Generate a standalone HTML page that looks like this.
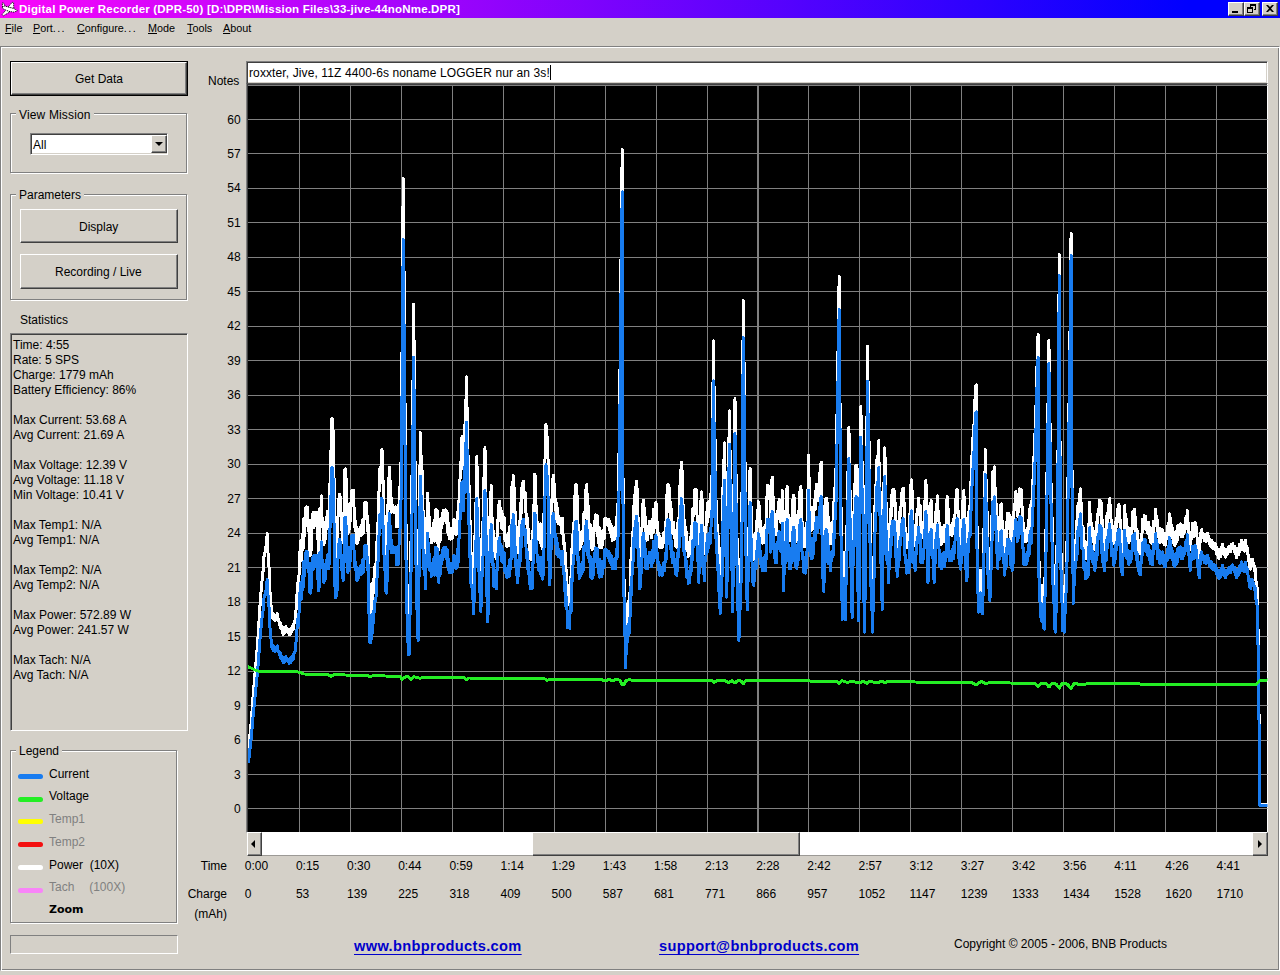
<!DOCTYPE html>
<html><head><meta charset="utf-8"><title>Digital Power Recorder (DPR-50)</title>
<style>
html,body{margin:0;padding:0;}
body{width:1280px;height:975px;overflow:hidden;background:#d4d0c8;position:relative;
 font-family:"Liberation Sans",Arial,sans-serif;font-size:12px;color:#000;}
div{box-sizing:border-box;}
.t{position:absolute;white-space:nowrap;}
.gray{color:#808080;}
.titlebar{position:absolute;left:0;top:0;width:1280px;height:18px;
 background:linear-gradient(to right,#fa06fa 0%,#0000ff 93%,#0000ff 100%);}
.ticon{position:absolute;left:0;top:0;}
.ttext{position:absolute;left:19px;top:1px;line-height:17px;color:#fff;font-weight:bold;font-size:11.5px;white-space:nowrap;letter-spacing:0.2px;}
.cap{position:absolute;top:2px;width:16px;height:14px;background:#d4d0c8;border:1px solid;border-color:#fff #404040 #404040 #fff;
 box-shadow:inset -1px -1px 0 #808080;}
.cap svg{position:absolute;left:0;top:0;}
.menu{font-size:10.8px;}
.frame{position:absolute;left:0;top:46px;width:1280px;height:925px;border:1px solid #808080;border-bottom-color:#fff;border-right-color:#fff;
 box-shadow:inset 1px 1px 0 #fff, inset -1px -1px 0 #808080;}
.btn{position:absolute;background:#d4d0c8;border:1px solid;border-color:#fff #404040 #404040 #fff;box-shadow:inset -1px -1px 0 #808080;}
.defbtn{position:absolute;border:1px solid #000;}
.sbtn{position:absolute;background:#d4d0c8;border:1px solid;border-color:#fff #404040 #404040 #fff;box-shadow:inset -1px -1px 0 #808080;}
.group{position:absolute;border:1px solid #808080;box-shadow:1px 1px 0 #fff, inset 1px 1px 0 #fff;}
.sunk{position:absolute;border:1px solid;border-color:#808080 #fff #fff #808080;box-shadow:inset 1px 1px 0 #404040, inset -1px -1px 0 #d4d0c8;}
.sunk1{position:absolute;border:1px solid;border-color:#808080 #fff #fff #808080;}
.sunkc{position:absolute;border:1px solid;border-color:#585858 #fff #fff #808080;box-shadow:inset 1px 1px 0 #404040;}
.track{position:absolute;background:#fff;border-bottom:1px solid #9c9a96;}
.lbar{position:absolute;left:18px;width:25px;height:5px;border-radius:2.5px;}
.zoom{font-family:'DejaVu Sans',sans-serif;font-weight:bold;font-size:11px;}
.link{color:#0000cc;font-weight:bold;font-size:14.6px;letter-spacing:0.36px;text-decoration:underline;text-underline-offset:2.5px;text-decoration-thickness:1px;}
.caret{position:absolute;left:550px;top:65px;width:1px;height:15px;background:#000;}
.arrd{position:absolute;left:3px;top:6px;width:0;height:0;border-left:4px solid transparent;border-right:4px solid transparent;border-top:4px solid #000;}
.arrl{position:absolute;left:3px;top:7px;width:0;height:0;border-top:4px solid transparent;border-bottom:4px solid transparent;border-right:4px solid #000;}
.arrr{position:absolute;left:5px;top:7px;width:0;height:0;border-top:4px solid transparent;border-bottom:4px solid transparent;border-left:4px solid #000;}
.chart{position:absolute;left:0;top:0;pointer-events:none;}
</style></head>
<body>
<div class="titlebar"><svg class="ticon" width="20" height="18" viewBox="0 0 20 18"><g fill="#fff" stroke="#000" stroke-width="0.9" stroke-dasharray="1.2 0.8" stroke-linejoin="round"><path d="M2.2 3 L3.6 3 L5.2 6.3 L2.6 7.2 Z"/><path d="M8 7.2 L12.2 2.3 L13.6 2.6 L13.8 8.8 Z"/><path d="M6.5 9.3 L2 14.6 L3.4 15.8 L10.5 11.6 Z"/><path d="M2.2 7.2 L4.5 6 L14 8.6 L17.3 10.6 L14.2 12.2 L9 11.4 L3 8.8 Z"/></g></svg><span class="ttext">Digital Power Recorder (DPR-50) [D:\DPR\Mission Files\33-jive-44noNme.DPR]</span><div class="cap" style="left:1228px"><svg width="14" height="12" viewBox="0 0 14 12"><rect x="3" y="8" width="6" height="2" fill="#000"/></svg></div><div class="cap" style="left:1244px"><svg width="14" height="12" viewBox="0 0 14 12"><path d="M5 1h6v2h-6zM5 3h1v2h-1zM10 3h1v4h-1zM9 6h1v1h-1z M2 4h6v2h-6zM2 6h1v4h-1zM7 6h1v4h-1zM3 9h4v1h-4z" fill="#000"/></svg></div><div class="cap" style="left:1262px"><svg width="14" height="12" viewBox="0 0 14 12"><path d="M3 2h2l2 2l2-2h2l-3 3.5l3 3.5h-2l-2-2l-2 2h-2l3-3.5z" fill="#000"/></svg></div></div>
<div class="t menu" style="left:5.0px;top:19.5px;line-height:16px;"><u>F</u>ile</div>
<div class="t menu" style="left:33.0px;top:19.5px;line-height:16px;"><u>P</u>ort<span style="letter-spacing:1.4px">...</span></div>
<div class="t menu" style="left:77.0px;top:19.5px;line-height:16px;"><u>C</u>onfigure<span style="letter-spacing:1.4px">...</span></div>
<div class="t menu" style="left:148.0px;top:19.5px;line-height:16px;"><u>M</u>ode</div>
<div class="t menu" style="left:187.0px;top:19.5px;line-height:16px;"><u>T</u>ools</div>
<div class="t menu" style="left:223.0px;top:19.5px;line-height:16px;"><u>A</u>bout</div>
<div class="frame"></div>
<div class="defbtn" style="left:10px;top:61px;width:178px;height:35px;"><div class="btn" style="left:0;top:0;right:0;bottom:0;position:absolute"></div></div>
<div class="t " style="left:75.0px;top:70.5px;line-height:16px;">Get Data</div>
<div class="group" style="left:10px;top:113px;width:177px;height:60px;"></div>
<div class="t " style="left:16.0px;top:106.5px;line-height:16px;background:#d4d0c8;padding:0 3px;letter-spacing:0.15px;">View Mission</div>
<div class="sunk" style="left:30px;top:133px;width:138px;height:22px;background:#fff;"></div>
<div class="t " style="left:33.0px;top:136.5px;line-height:16px;">All</div>
<div class="btn" style="left:151px;top:135px;width:16px;height:18px;"><div class="arrd"></div></div>
<div class="group" style="left:10px;top:194px;width:177px;height:106px;"></div>
<div class="t " style="left:16.0px;top:186.5px;line-height:16px;background:#d4d0c8;padding:0 3px;">Parameters</div>
<div class="btn" style="left:20px;top:209px;width:158px;height:34px;"></div>
<div class="t " style="left:79.0px;top:218.5px;line-height:16px;">Display</div>
<div class="btn" style="left:20px;top:254px;width:158px;height:35px;"></div>
<div class="t " style="left:55.0px;top:263.5px;line-height:16px;">Recording / Live</div>
<div class="t " style="left:20.0px;top:312.0px;line-height:16px;">Statistics</div>
<div class="sunk" style="left:10px;top:333px;width:178px;height:398px;"></div>
<div class="t " style="left:13.0px;top:336.5px;line-height:16px;">Time: 4:55</div>
<div class="t " style="left:13.0px;top:351.5px;line-height:16px;">Rate: 5 SPS</div>
<div class="t " style="left:13.0px;top:366.5px;line-height:16px;">Charge: 1779 mAh</div>
<div class="t " style="left:13.0px;top:381.5px;line-height:16px;">Battery Efficiency: 86%</div>
<div class="t " style="left:13.0px;top:411.5px;line-height:16px;">Max Current: 53.68 A</div>
<div class="t " style="left:13.0px;top:426.5px;line-height:16px;">Avg Current: 21.69 A</div>
<div class="t " style="left:13.0px;top:456.5px;line-height:16px;">Max Voltage: 12.39 V</div>
<div class="t " style="left:13.0px;top:471.5px;line-height:16px;">Avg Voltage: 11.18 V</div>
<div class="t " style="left:13.0px;top:486.5px;line-height:16px;">Min Voltage: 10.41 V</div>
<div class="t " style="left:13.0px;top:516.5px;line-height:16px;">Max Temp1: N/A</div>
<div class="t " style="left:13.0px;top:531.5px;line-height:16px;">Avg Temp1: N/A</div>
<div class="t " style="left:13.0px;top:561.5px;line-height:16px;">Max Temp2: N/A</div>
<div class="t " style="left:13.0px;top:576.5px;line-height:16px;">Avg Temp2: N/A</div>
<div class="t " style="left:13.0px;top:606.5px;line-height:16px;">Max Power: 572.89 W</div>
<div class="t " style="left:13.0px;top:621.5px;line-height:16px;">Avg Power: 241.57 W</div>
<div class="t " style="left:13.0px;top:651.5px;line-height:16px;">Max Tach: N/A</div>
<div class="t " style="left:13.0px;top:666.5px;line-height:16px;">Avg Tach: N/A</div>
<div class="group" style="left:10px;top:750px;width:167px;height:173px;"></div>
<div class="t " style="left:16.0px;top:742.5px;line-height:16px;background:#d4d0c8;padding:0 3px;">Legend</div>
<div class="lbar" style="top:773.5px;background:#187cf0"></div>
<div class="t " style="left:49.0px;top:765.7px;line-height:16px;">Current</div>
<div class="lbar" style="top:796.5px;background:#24ee24"></div>
<div class="t " style="left:49.0px;top:788.2px;line-height:16px;">Voltage</div>
<div class="lbar" style="top:819.0px;background:#ffff00"></div>
<div class="t gray" style="left:49.0px;top:810.7px;line-height:16px;">Temp1</div>
<div class="lbar" style="top:841.5px;background:#f41010"></div>
<div class="t gray" style="left:49.0px;top:833.7px;line-height:16px;">Temp2</div>
<div class="lbar" style="top:864.5px;background:#ffffff"></div>
<div class="t " style="left:49.0px;top:856.7px;line-height:16px;">Power&nbsp;&nbsp;(10X)</div>
<div class="lbar" style="top:888.0px;background:#f884f8"></div>
<div class="t gray" style="left:49.0px;top:879.2px;line-height:16px;">Tach&nbsp;&nbsp;&nbsp;&nbsp;<span style="margin-left:1.5px">(100X)</span></div>
<div class="t zoom" style="left:49.0px;top:901.5px;line-height:16px;">Zoom</div>
<div class="sunk1" style="left:10px;top:935px;width:168px;height:19px;"></div>
<div class="t " style="left:208.0px;top:72.5px;line-height:16px;">Notes</div>
<div class="sunk" style="left:246px;top:61px;width:1022px;height:23px;background:#fff;"></div>
<div class="t " style="left:249.0px;top:65.0px;line-height:16px;letter-spacing:0.11px;">roxxter, Jive, 11Z 4400-6s noname LOGGER nur an 3s!</div>
<div class="caret"></div>
<div class="sunkc" style="left:246px;top:83px;width:1022px;height:750px;background:#000;"></div>
<div class="t " style="right:1039.3px;top:801.0px;line-height:16px;">0</div>
<div class="t " style="right:1039.3px;top:766.5px;line-height:16px;">3</div>
<div class="t " style="right:1039.3px;top:732.0px;line-height:16px;">6</div>
<div class="t " style="right:1039.3px;top:697.6px;line-height:16px;">9</div>
<div class="t " style="right:1039.3px;top:663.1px;line-height:16px;">12</div>
<div class="t " style="right:1039.3px;top:628.6px;line-height:16px;">15</div>
<div class="t " style="right:1039.3px;top:594.1px;line-height:16px;">18</div>
<div class="t " style="right:1039.3px;top:559.7px;line-height:16px;">21</div>
<div class="t " style="right:1039.3px;top:525.2px;line-height:16px;">24</div>
<div class="t " style="right:1039.3px;top:490.7px;line-height:16px;">27</div>
<div class="t " style="right:1039.3px;top:456.2px;line-height:16px;">30</div>
<div class="t " style="right:1039.3px;top:421.8px;line-height:16px;">33</div>
<div class="t " style="right:1039.3px;top:387.3px;line-height:16px;">36</div>
<div class="t " style="right:1039.3px;top:352.8px;line-height:16px;">39</div>
<div class="t " style="right:1039.3px;top:318.3px;line-height:16px;">42</div>
<div class="t " style="right:1039.3px;top:283.9px;line-height:16px;">45</div>
<div class="t " style="right:1039.3px;top:249.4px;line-height:16px;">48</div>
<div class="t " style="right:1039.3px;top:214.9px;line-height:16px;">51</div>
<div class="t " style="right:1039.3px;top:180.4px;line-height:16px;">54</div>
<div class="t " style="right:1039.3px;top:146.0px;line-height:16px;">57</div>
<div class="t " style="right:1039.3px;top:111.5px;line-height:16px;">60</div>
<div class="track" style="left:247px;top:832px;width:1021px;height:24px;"></div>
<div class="sbtn" style="left:247px;top:832px;width:15px;height:24px;"><div class="arrl"></div></div>
<div class="sbtn" style="left:1252px;top:832px;width:16px;height:24px;"><div class="arrr"></div></div>
<div class="sbtn" style="left:532px;top:832px;width:268px;height:24px;"></div>
<div class="t " style="left:244.8px;top:858.0px;line-height:16px;">0:00</div>
<div class="t " style="left:244.8px;top:885.5px;line-height:16px;">0</div>
<div class="t " style="left:295.9px;top:858.0px;line-height:16px;">0:15</div>
<div class="t " style="left:295.9px;top:885.5px;line-height:16px;">53</div>
<div class="t " style="left:347.1px;top:858.0px;line-height:16px;">0:30</div>
<div class="t " style="left:347.1px;top:885.5px;line-height:16px;">139</div>
<div class="t " style="left:398.2px;top:858.0px;line-height:16px;">0:44</div>
<div class="t " style="left:398.2px;top:885.5px;line-height:16px;">225</div>
<div class="t " style="left:449.4px;top:858.0px;line-height:16px;">0:59</div>
<div class="t " style="left:449.4px;top:885.5px;line-height:16px;">318</div>
<div class="t " style="left:500.5px;top:858.0px;line-height:16px;">1:14</div>
<div class="t " style="left:500.5px;top:885.5px;line-height:16px;">409</div>
<div class="t " style="left:551.6px;top:858.0px;line-height:16px;">1:29</div>
<div class="t " style="left:551.6px;top:885.5px;line-height:16px;">500</div>
<div class="t " style="left:602.8px;top:858.0px;line-height:16px;">1:43</div>
<div class="t " style="left:602.8px;top:885.5px;line-height:16px;">587</div>
<div class="t " style="left:653.9px;top:858.0px;line-height:16px;">1:58</div>
<div class="t " style="left:653.9px;top:885.5px;line-height:16px;">681</div>
<div class="t " style="left:705.1px;top:858.0px;line-height:16px;">2:13</div>
<div class="t " style="left:705.1px;top:885.5px;line-height:16px;">771</div>
<div class="t " style="left:756.2px;top:858.0px;line-height:16px;">2:28</div>
<div class="t " style="left:756.2px;top:885.5px;line-height:16px;">866</div>
<div class="t " style="left:807.3px;top:858.0px;line-height:16px;">2:42</div>
<div class="t " style="left:807.3px;top:885.5px;line-height:16px;">957</div>
<div class="t " style="left:858.5px;top:858.0px;line-height:16px;">2:57</div>
<div class="t " style="left:858.5px;top:885.5px;line-height:16px;">1052</div>
<div class="t " style="left:909.6px;top:858.0px;line-height:16px;">3:12</div>
<div class="t " style="left:909.6px;top:885.5px;line-height:16px;">1147</div>
<div class="t " style="left:960.8px;top:858.0px;line-height:16px;">3:27</div>
<div class="t " style="left:960.8px;top:885.5px;line-height:16px;">1239</div>
<div class="t " style="left:1011.9px;top:858.0px;line-height:16px;">3:42</div>
<div class="t " style="left:1011.9px;top:885.5px;line-height:16px;">1333</div>
<div class="t " style="left:1063.0px;top:858.0px;line-height:16px;">3:56</div>
<div class="t " style="left:1063.0px;top:885.5px;line-height:16px;">1434</div>
<div class="t " style="left:1114.2px;top:858.0px;line-height:16px;">4:11</div>
<div class="t " style="left:1114.2px;top:885.5px;line-height:16px;">1528</div>
<div class="t " style="left:1165.3px;top:858.0px;line-height:16px;">4:26</div>
<div class="t " style="left:1165.3px;top:885.5px;line-height:16px;">1620</div>
<div class="t " style="left:1216.5px;top:858.0px;line-height:16px;">4:41</div>
<div class="t " style="left:1216.5px;top:885.5px;line-height:16px;">1710</div>
<div class="t " style="right:1053.0px;top:858.0px;line-height:16px;">Time</div>
<div class="t " style="right:1053.0px;top:885.5px;line-height:16px;">Charge</div>
<div class="t " style="right:1053.0px;top:905.5px;line-height:16px;">(mAh)</div>
<div class="t link" style="left:354.0px;top:935.7px;line-height:20px;">www.bnbproducts.com</div>
<div class="t link" style="left:659.0px;top:935.7px;line-height:20px;">support@bnbproducts.com</div>
<div class="t " style="left:954.0px;top:935.5px;line-height:16px;">Copyright &copy; 2005 - 2006, BNB Products</div>
<svg class="chart" width="1280" height="975" viewBox="0 0 1280 975">
<defs><clipPath id="cc"><rect x="248" y="85" width="1019.5" height="747"/></clipPath></defs>
<g clip-path="url(#cc)">
<g stroke="#808080" stroke-width="1" shape-rendering="crispEdges">
<line x1="299.5" y1="86" x2="299.5" y2="832"/>
<line x1="350.5" y1="86" x2="350.5" y2="832"/>
<line x1="401.5" y1="86" x2="401.5" y2="832"/>
<line x1="452.5" y1="86" x2="452.5" y2="832"/>
<line x1="503.5" y1="86" x2="503.5" y2="832"/>
<line x1="554.5" y1="86" x2="554.5" y2="832"/>
<line x1="605.5" y1="86" x2="605.5" y2="832"/>
<line x1="656.5" y1="86" x2="656.5" y2="832"/>
<line x1="707.5" y1="86" x2="707.5" y2="832"/>
<line x1="758.0" y1="86" x2="758.0" y2="832" stroke="#808080" stroke-width="2"/>
<line x1="808.5" y1="86" x2="808.5" y2="832"/>
<line x1="859.5" y1="86" x2="859.5" y2="832"/>
<line x1="910.5" y1="86" x2="910.5" y2="832"/>
<line x1="961.5" y1="86" x2="961.5" y2="832"/>
<line x1="1012.5" y1="86" x2="1012.5" y2="832"/>
<line x1="1063.5" y1="86" x2="1063.5" y2="832"/>
<line x1="1114.5" y1="86" x2="1114.5" y2="832"/>
<line x1="1165.5" y1="86" x2="1165.5" y2="832"/>
<line x1="1216.5" y1="86" x2="1216.5" y2="832"/>
<line x1="248" y1="808.5" x2="1268" y2="808.5"/>
<line x1="248" y1="774.5" x2="1268" y2="774.5"/>
<line x1="248" y1="740.5" x2="1268" y2="740.5"/>
<line x1="248" y1="705.5" x2="1268" y2="705.5"/>
<line x1="248" y1="671.5" x2="1268" y2="671.5"/>
<line x1="248" y1="636.5" x2="1268" y2="636.5"/>
<line x1="248" y1="602.5" x2="1268" y2="602.5"/>
<line x1="248" y1="567.5" x2="1268" y2="567.5"/>
<line x1="248" y1="533.5" x2="1268" y2="533.5"/>
<line x1="248" y1="498.5" x2="1268" y2="498.5"/>
<line x1="248" y1="464.5" x2="1268" y2="464.5"/>
<line x1="248" y1="429.5" x2="1268" y2="429.5"/>
<line x1="248" y1="395.5" x2="1268" y2="395.5"/>
<line x1="248" y1="360.5" x2="1268" y2="360.5"/>
<line x1="248" y1="326.5" x2="1268" y2="326.5"/>
<line x1="248" y1="291.5" x2="1268" y2="291.5"/>
<line x1="248" y1="257.5" x2="1268" y2="257.5"/>
<line x1="248" y1="222.5" x2="1268" y2="222.5"/>
<line x1="248" y1="188.5" x2="1268" y2="188.5"/>
<line x1="248" y1="153.5" x2="1268" y2="153.5"/>
<line x1="248" y1="119.5" x2="1268" y2="119.5"/>
<line x1="248" y1="85.5" x2="1268" y2="85.5"/>
</g>
<g fill="none" stroke-width="3" stroke-linejoin="round" stroke-linecap="round" shape-rendering="crispEdges">
<polyline stroke="#ffffff" points="248.5,750.2 248.5,750.3 249.2,744.2 249.9,735.4 250.5,731.2 251.4,718.2 252.1,710.1 252.8,699.5 253.5,690.1 254.3,682.9 255.0,673.5 255.7,665.9 256.4,656.7 257.1,649.4 257.7,641.2 258.6,629.1 259.3,616.2 260.0,605.8 260.4,600.4 260.7,594.6 261.5,587.8 262.2,577.8 262.9,573.3 263.9,557.9 264.3,553.4 265.1,553.0 265.8,548.2 266.5,542.6 267.2,533.7 267.9,551.5 268.8,563.0 269.4,574.3 270.1,594.2 270.4,598.0 270.8,604.6 271.5,607.1 272.1,617.2 273.0,613.1 273.7,619.5 274.4,616.7 274.7,616.3 275.1,621.0 275.9,615.0 276.8,618.3 277.3,613.7 278.0,621.1 278.8,619.7 279.5,624.6 280.2,622.2 280.9,629.1 281.5,625.6 282.3,627.2 283.1,634.3 284.0,631.2 284.5,629.0 285.2,632.1 285.9,626.2 286.6,631.1 287.4,631.9 288.1,629.5 289.1,634.7 289.5,629.5 290.3,634.2 291.0,627.9 291.7,631.7 292.2,626.2 293.1,629.8 293.9,623.5 294.6,622.5 295.3,619.3 296.3,605.9 296.7,602.1 297.5,582.7 297.9,593.2 298.9,579.9 299.6,552.5 300.3,561.2 300.8,540.8 301.8,560.6 302.4,534.6 303.2,548.4 303.9,518.6 304.5,535.6 305.4,508.1 306.1,525.6 306.5,506.7 307.6,507.4 308.3,530.9 309.0,520.4 309.7,554.6 310.2,555.7 311.1,550.1 311.7,521.8 312.6,514.3 313.3,528.0 313.7,512.0 314.0,524.9 314.7,512.0 315.5,518.7 315.8,512.7 316.2,525.5 316.9,512.1 317.2,531.7 317.6,525.9 318.4,553.6 319.1,549.0 319.9,508.0 320.5,520.9 321.5,496.0 321.9,515.4 322.9,527.8 323.4,523.1 324.0,544.2 324.8,522.7 325.4,539.3 326.3,517.2 327.1,524.6 327.7,511.4 328.4,528.6 329.1,524.2 330.1,479.5 330.6,472.3 331.2,439.9 332.0,418.3 332.7,419.5 333.6,449.7 334.4,504.3 334.9,545.3 335.3,561.7 335.6,562.3 336.3,542.3 336.9,559.9 337.8,517.7 338.3,515.1 339.2,494.2 339.8,494.8 340.7,501.8 341.4,530.0 342.1,519.5 343.1,542.8 343.5,528.5 344.5,496.0 345.0,469.3 345.5,468.9 346.4,485.2 346.9,520.6 348.0,533.4 348.6,520.2 349.3,529.3 349.6,503.9 350.0,521.7 350.7,513.9 351.7,490.6 352.2,501.9 352.9,490.0 353.3,501.2 353.6,490.1 354.3,518.4 354.7,516.7 355.1,531.0 355.8,521.6 356.8,543.3 357.2,532.0 357.9,542.4 358.8,529.1 359.4,533.3 360.1,527.3 360.9,536.1 361.5,525.3 362.3,534.5 362.9,519.1 363.7,532.6 364.4,503.2 365.0,502.3 365.9,511.9 366.4,502.9 367.3,521.0 367.7,530.8 368.0,523.2 368.7,567.4 369.7,617.2 370.2,618.0 370.9,617.5 371.8,593.6 372.3,605.2 373.1,579.1 373.8,592.6 374.2,572.5 375.2,565.1 375.9,567.0 376.3,552.1 376.7,556.8 377.4,523.4 378.3,521.5 378.8,491.8 379.5,491.0 380.0,467.6 381.0,470.8 381.7,449.6 382.0,450.2 382.4,451.8 383.1,488.7 383.5,481.3 383.9,512.1 384.6,531.9 384.9,523.3 385.3,553.9 386.0,557.2 386.5,559.2 387.5,534.0 388.0,503.8 388.9,483.4 389.2,467.0 389.6,482.5 390.3,481.0 390.6,494.6 391.1,512.5 391.8,498.2 392.3,511.9 393.2,507.5 393.9,512.9 394.3,507.3 394.7,512.4 395.4,506.8 396.4,513.1 396.8,526.9 397.5,511.5 398.4,526.4 399.0,504.1 399.9,493.2 400.4,463.1 401.3,462.0 401.9,367.8 402.6,275.1 403.2,178.5 404.0,268.3 404.7,377.8 405.5,441.4 406.0,522.0 406.9,581.7 407.5,595.5 408.3,631.3 409.1,632.6 409.8,593.1 410.7,576.1 411.2,522.2 412.0,476.4 412.7,403.4 413.4,350.7 413.8,304.0 414.1,356.0 414.8,433.6 415.3,499.4 416.3,540.7 416.9,575.4 417.7,613.0 418.3,616.2 419.4,506.1 419.9,478.8 420.3,432.7 421.3,463.9 421.8,460.6 422.7,502.0 423.5,523.0 424.2,538.5 424.9,538.7 425.5,556.5 426.3,518.9 427.1,517.0 427.6,493.1 428.5,513.1 429.2,527.7 429.6,516.9 429.9,536.3 430.7,527.8 431.3,542.8 432.1,536.3 432.8,541.2 433.7,522.9 434.3,541.1 435.0,519.1 435.7,509.5 436.4,524.8 436.8,510.1 437.1,510.5 437.9,543.0 438.8,550.1 439.3,533.9 440.0,542.1 440.9,518.6 441.5,528.1 442.2,513.5 442.9,524.1 443.6,510.4 444.3,516.1 445.1,509.9 446.0,510.0 446.5,523.0 447.2,512.5 448.1,535.0 448.7,523.6 449.4,538.6 450.1,528.0 450.8,539.1 451.5,528.5 452.2,538.9 453.0,535.1 453.7,519.6 454.2,520.2 455.1,522.5 455.9,534.8 456.3,534.3 457.3,533.3 458.0,511.2 458.3,526.8 458.7,500.9 459.5,499.3 460.4,463.0 460.9,465.3 461.6,437.8 462.0,437.1 462.3,436.6 463.3,469.1 463.8,449.5 464.5,453.2 465.2,414.5 465.9,403.8 466.5,377.0 467.4,428.2 467.8,434.2 468.1,464.1 468.8,472.3 469.6,521.7 470.3,520.6 471.0,552.7 471.7,554.0 472.4,559.6 473.1,571.9 473.7,586.5 474.6,550.8 475.2,528.2 476.0,502.8 476.8,456.5 477.5,488.0 478.4,507.7 478.9,538.2 479.6,540.3 480.3,579.7 480.9,584.4 481.8,546.8 482.5,540.6 482.9,526.5 483.9,478.3 484.7,469.6 485.0,447.8 485.4,480.3 486.1,500.0 486.6,550.7 487.7,596.3 488.3,581.4 489.0,529.3 489.5,524.2 490.4,509.6 491.2,485.7 491.9,514.7 492.6,531.5 493.2,530.7 494.0,556.4 494.7,538.3 495.5,544.7 496.3,559.2 496.9,538.8 497.6,537.5 498.3,505.0 499.1,514.9 499.8,501.1 500.5,520.6 501.4,510.7 501.9,528.3 502.7,514.5 503.5,530.3 504.1,517.8 504.8,539.2 505.5,535.4 506.3,546.1 507.0,536.7 507.7,546.2 508.4,533.7 509.1,545.6 509.9,526.4 510.6,536.4 511.1,524.9 512.0,486.5 512.7,489.7 513.2,475.1 513.5,488.8 514.2,487.9 514.9,523.9 515.2,511.7 515.6,533.2 516.3,526.4 517.3,552.9 517.8,541.3 518.5,545.3 519.3,521.2 519.9,533.5 520.7,502.7 521.4,512.5 522.1,483.3 522.8,498.0 523.4,481.0 524.3,496.7 525.0,492.4 525.5,497.4 526.4,524.2 527.1,517.8 527.5,524.7 527.9,538.4 528.6,529.2 529.3,554.4 530.0,541.5 530.7,559.5 531.5,546.6 532.0,560.0 532.9,530.2 533.7,530.4 534.3,479.7 534.7,474.4 535.1,475.9 535.8,505.6 536.7,505.9 537.2,529.1 537.9,523.7 538.8,539.2 539.4,530.0 540.1,542.5 540.8,523.9 541.5,543.2 542.3,549.0 542.9,548.5 543.9,523.4 544.4,479.6 544.9,463.3 546.0,424.4 546.6,441.7 547.3,436.9 548.0,458.2 548.6,491.9 549.3,556.4 550.2,546.9 551.1,507.8 551.6,514.7 552.3,487.8 553.2,475.0 553.8,494.0 554.5,483.8 555.2,509.6 555.9,498.8 556.7,521.5 557.3,508.1 558.1,524.1 558.8,516.1 559.3,523.5 560.3,524.9 561.0,518.3 561.4,518.9 561.7,533.1 562.4,518.3 563.4,543.4 563.9,537.2 564.6,563.3 565.5,553.4 566.0,580.9 566.7,570.4 567.5,604.7 568.2,588.9 569.2,604.7 569.6,605.2 570.3,577.6 571.0,587.9 571.8,548.8 572.6,551.2 573.2,526.6 573.9,525.2 574.7,501.7 575.4,485.9 576.3,484.4 576.8,485.9 577.8,528.3 578.3,525.0 579.2,549.3 579.7,538.3 580.4,546.5 580.8,532.8 581.9,543.6 582.6,531.2 582.9,541.0 583.3,538.4 584.0,512.7 584.9,517.7 585.5,490.2 586.2,502.8 586.6,484.7 586.9,499.0 587.6,494.6 588.0,523.3 588.3,506.3 589.1,530.1 590.1,524.0 590.5,547.6 591.2,536.6 592.1,549.5 592.7,536.8 593.4,545.8 594.2,521.2 594.8,530.2 595.6,514.9 596.3,522.9 597.3,535.8 597.7,515.9 598.4,542.9 599.3,527.8 599.9,547.9 600.6,535.8 601.4,547.8 602.0,547.1 602.7,530.7 603.4,537.3 604.2,538.4 604.9,518.6 605.5,519.4 606.3,518.7 607.1,523.6 607.5,525.0 608.5,519.2 609.2,529.5 609.6,527.7 609.9,521.6 610.7,532.9 611.6,526.2 612.1,540.6 612.8,531.4 613.7,539.6 614.3,534.1 615.0,527.4 615.7,538.9 616.4,517.0 617.1,526.8 617.8,508.9 618.8,480.6 619.3,418.5 620.0,370.5 620.7,286.7 621.5,215.2 622.2,149.7 623.1,518.4 623.6,537.5 624.3,608.6 625.1,619.9 625.6,652.2 626.5,620.0 627.0,623.7 627.9,603.0 628.7,613.3 629.1,596.9 629.4,610.8 630.1,590.0 631.1,556.2 631.5,568.6 632.3,535.2 633.2,530.7 633.7,505.7 634.4,515.7 635.2,487.4 635.9,499.1 636.6,481.4 637.3,491.8 638.3,527.6 638.7,522.5 639.5,561.8 639.9,562.8 640.9,551.4 641.4,528.3 642.3,527.6 643.1,500.2 643.4,500.8 643.8,500.2 644.5,523.3 645.5,517.6 645.9,540.4 646.7,526.4 647.5,539.8 648.1,529.7 648.8,533.0 649.6,521.5 650.3,533.4 651.0,523.9 651.6,537.5 652.4,519.6 653.1,532.8 653.7,509.3 654.6,516.8 655.3,510.5 655.7,503.1 656.0,502.5 656.7,528.2 657.5,522.2 657.8,527.5 658.2,541.5 658.9,533.1 659.8,547.3 660.3,537.6 661.1,547.3 661.9,546.7 662.5,547.3 663.2,537.0 663.9,532.9 664.7,542.2 665.4,522.7 666.0,531.3 666.8,497.3 667.5,485.5 668.0,484.8 669.0,486.0 669.7,512.4 670.1,501.3 670.4,517.8 671.1,507.9 672.1,529.3 672.6,533.7 673.3,522.1 674.2,537.8 674.7,529.8 675.5,545.8 676.2,546.7 676.9,547.3 677.6,523.1 678.3,527.0 679.1,515.6 679.8,486.2 680.3,482.7 681.4,462.4 681.9,464.6 682.7,502.8 683.4,505.2 684.1,523.9 684.8,520.2 685.5,537.5 686.3,531.5 687.0,550.2 687.5,542.6 688.4,556.4 689.1,549.3 689.6,555.9 690.6,537.1 691.3,542.6 691.6,525.9 692.0,532.2 692.7,508.6 693.7,516.3 694.2,508.2 694.9,488.9 695.7,489.5 696.3,489.8 697.4,527.9 697.8,526.8 698.8,556.1 699.2,538.6 700.2,530.0 700.7,505.8 701.5,492.0 702.1,500.7 702.9,538.3 703.5,534.9 704.3,554.0 705.0,532.6 706.0,526.3 706.4,512.1 707.1,522.8 708.0,502.0 708.6,517.0 709.3,501.0 710.1,512.6 710.7,504.7 711.5,475.9 712.1,484.0 712.9,391.5 713.5,341.0 714.3,410.8 715.1,442.5 715.8,508.2 716.5,501.3 717.2,532.2 717.9,542.9 718.3,536.3 718.7,560.3 719.4,574.7 720.3,590.6 720.8,583.2 721.5,548.2 722.0,551.0 723.0,487.1 723.4,485.4 724.4,442.9 725.1,474.6 725.5,510.9 725.9,518.4 726.5,573.7 727.3,549.2 728.1,493.6 728.7,465.0 729.3,410.8 730.2,459.0 730.9,476.7 731.4,505.6 732.3,561.7 732.6,589.2 733.1,557.2 733.8,537.0 734.3,495.0 735.0,398.6 735.9,463.9 736.7,532.0 737.4,545.7 738.1,593.1 738.8,620.4 739.5,611.8 740.3,572.4 740.8,576.1 741.7,497.6 742.1,490.5 742.4,428.1 743.3,300.5 743.9,348.7 744.6,431.9 745.3,483.7 745.8,514.7 746.7,567.2 747.4,586.1 748.2,546.1 749.1,526.8 749.6,481.8 750.1,467.9 751.1,509.6 751.5,514.4 752.5,551.3 753.2,559.0 753.9,559.3 754.7,535.0 755.2,533.1 756.1,541.0 756.8,520.4 757.3,527.1 758.3,501.3 759.0,504.7 759.7,523.2 760.3,521.1 761.1,538.5 761.9,528.7 762.4,543.2 763.3,538.4 764.0,537.6 764.4,542.7 764.7,527.4 765.5,543.3 766.2,517.7 766.5,529.6 766.9,498.8 767.5,485.6 768.3,485.7 768.9,497.9 769.8,492.7 770.6,522.3 771.2,498.2 772.1,476.9 772.7,480.4 773.5,519.3 774.1,513.2 774.8,524.8 775.2,533.9 775.5,523.6 776.3,534.5 777.2,516.7 777.7,515.4 778.4,503.4 779.3,499.7 779.9,512.6 780.6,512.1 780.9,522.6 781.3,502.9 782.0,506.9 782.3,490.6 782.7,513.6 783.4,566.0 784.2,542.7 784.9,542.1 785.4,516.9 786.3,507.3 787.1,486.1 787.8,512.9 788.5,515.8 789.2,541.1 789.9,524.3 790.5,540.9 791.4,518.1 792.0,534.6 792.8,501.0 793.6,495.2 794.3,498.1 795.3,520.4 795.7,538.6 796.7,541.0 797.1,529.7 797.9,536.6 798.7,511.4 799.3,522.1 800.0,491.2 800.8,486.2 801.5,495.2 802.2,530.4 802.9,525.0 803.9,546.2 804.3,539.3 805.1,546.2 805.9,545.6 806.5,524.1 807.2,521.7 807.6,493.1 807.9,495.4 808.6,455.1 809.4,497.9 810.0,505.2 810.8,527.9 811.5,530.2 812.1,529.7 813.0,516.9 813.7,525.2 814.1,500.8 815.1,509.9 815.9,490.4 816.2,491.0 816.6,484.2 817.3,501.0 818.2,495.6 818.7,496.2 819.5,473.6 820.3,483.0 820.9,463.3 821.3,462.1 821.6,469.8 822.3,528.8 823.4,566.5 823.8,567.0 824.8,522.4 825.2,534.4 825.9,499.0 826.4,498.1 827.4,505.2 828.1,525.3 828.5,516.7 828.8,536.4 829.5,528.5 830.5,543.7 831.0,534.1 831.7,522.9 832.6,528.9 833.1,526.7 833.9,501.7 834.6,507.6 835.3,472.7 836.3,467.0 836.7,423.4 837.5,401.1 838.2,334.5 839.2,276.5 839.6,328.1 840.3,456.3 840.8,494.3 841.8,553.7 842.2,597.9 843.2,558.4 843.9,552.8 844.7,563.7 845.3,599.4 846.1,557.5 846.9,530.8 847.5,500.8 848.3,453.9 848.9,427.3 849.7,465.7 850.6,534.6 851.1,541.1 852.1,596.3 852.6,564.0 853.5,512.4 854.0,519.7 854.7,483.9 855.2,486.6 855.5,466.7 856.2,465.1 856.9,500.4 857.2,535.4 857.6,536.0 858.3,594.1 858.6,602.2 859.1,574.3 859.7,497.5 860.7,406.5 861.2,420.2 861.9,459.9 862.9,472.1 863.4,528.8 864.4,613.1 864.8,594.6 865.8,515.3 866.3,474.1 867.0,417.3 867.6,346.0 868.4,413.7 869.1,445.5 869.9,509.4 870.6,532.3 871.2,576.1 872.0,589.7 872.6,613.3 873.5,566.1 874.0,556.2 874.9,507.5 875.7,486.8 876.3,482.0 877.1,456.6 877.8,466.4 878.7,440.6 879.2,473.7 879.9,484.9 880.8,532.0 881.4,544.4 882.2,587.8 882.8,535.9 883.5,509.9 884.3,465.7 884.8,447.8 885.9,494.7 886.4,524.0 887.1,535.9 887.6,524.2 888.6,558.1 889.3,534.9 890.0,531.7 890.7,509.0 891.5,516.0 892.1,490.5 892.9,505.3 893.6,489.6 894.1,490.2 895.1,502.8 895.8,530.4 896.5,530.1 897.2,551.7 897.9,546.3 898.7,520.6 899.3,533.5 900.1,508.6 900.8,516.2 901.3,493.7 902.3,505.9 903.0,487.9 903.4,488.4 903.7,488.4 904.4,519.3 904.8,510.6 905.1,537.0 905.9,528.1 906.4,548.0 907.3,535.5 908.0,548.1 908.5,547.5 909.5,539.0 910.1,509.1 910.9,485.2 911.6,479.9 912.3,496.5 913.0,537.0 913.8,537.6 914.5,532.2 915.1,545.4 915.9,524.0 916.7,527.4 917.1,508.9 918.1,515.0 918.7,498.0 919.5,513.7 920.3,506.3 920.8,536.7 921.7,522.7 922.4,537.1 922.8,536.6 923.9,524.3 924.6,500.7 924.9,514.3 925.3,484.3 925.9,480.3 926.9,515.3 927.5,551.2 928.0,559.4 928.9,537.2 929.4,505.8 930.3,515.3 931.1,500.6 931.8,519.7 932.7,532.4 933.2,531.9 934.1,559.5 934.7,540.7 935.6,536.4 936.1,506.1 936.8,512.2 937.2,496.2 937.5,495.7 938.3,518.3 938.8,516.1 939.7,541.5 940.3,527.3 941.1,544.4 941.7,543.8 942.6,531.0 943.4,535.3 944.0,525.8 944.7,541.8 945.4,529.7 946.2,525.7 947.1,496.5 947.6,501.0 948.5,516.0 949.1,535.5 949.8,525.3 950.5,535.0 951.2,530.5 951.9,535.4 952.6,522.8 953.4,533.5 954.1,515.6 954.6,527.0 955.5,499.3 956.1,512.0 957.0,489.5 957.3,490.0 957.7,493.6 958.4,529.6 958.7,515.7 959.1,538.9 959.9,530.2 960.2,544.2 960.6,544.8 961.3,520.2 961.8,537.9 962.7,505.3 963.5,492.4 963.9,490.2 964.2,504.6 964.9,511.4 965.3,531.1 965.6,527.3 966.3,558.0 967.1,554.4 968.0,521.6 968.5,526.4 969.2,505.8 970.0,509.8 970.7,482.8 971.4,479.4 972.1,451.6 972.8,438.1 973.5,440.8 974.3,414.3 975.0,399.6 975.7,385.7 976.3,385.0 976.8,500.2 977.1,538.0 977.9,562.1 978.2,593.1 978.6,593.2 979.3,576.2 980.3,582.1 980.7,570.2 981.5,590.5 982.2,578.3 982.7,593.0 983.6,540.9 984.4,516.7 985.3,449.6 985.8,475.4 986.5,487.0 986.8,514.0 987.2,511.6 987.9,551.6 988.5,552.1 989.4,578.9 989.9,579.8 990.8,557.7 991.6,517.5 992.3,513.4 993.0,471.3 993.7,481.5 994.6,466.8 995.1,490.8 995.9,494.5 996.3,525.9 997.3,530.5 997.7,545.0 998.0,535.3 998.7,524.1 999.5,535.0 999.8,516.7 1000.2,531.0 1000.9,504.0 1001.2,504.6 1001.6,504.0 1002.3,531.4 1002.8,526.9 1003.8,535.5 1004.5,552.4 1004.9,551.9 1005.2,535.5 1005.9,546.0 1006.5,532.9 1007.4,513.2 1008.0,513.7 1008.8,513.2 1009.5,529.2 1010.0,515.7 1011.0,542.4 1011.7,539.2 1012.1,547.6 1012.4,533.9 1013.1,539.9 1014.1,507.8 1014.6,504.5 1015.3,503.3 1015.8,491.5 1016.7,500.4 1017.2,516.2 1018.0,498.4 1018.9,512.2 1019.6,488.9 1020.3,500.9 1021.1,489.4 1021.8,498.0 1022.5,523.2 1023.1,522.1 1023.9,541.6 1024.7,531.0 1025.4,541.6 1025.8,541.1 1026.1,541.7 1026.8,529.6 1027.5,537.8 1028.3,520.6 1029.0,532.0 1029.7,511.2 1030.3,505.5 1031.1,519.0 1031.9,500.6 1032.4,499.2 1033.3,469.3 1034.0,455.9 1034.7,447.2 1035.5,410.0 1036.2,402.9 1036.9,369.8 1037.6,344.2 1038.1,334.0 1038.1,504.6 1039.1,566.0 1039.5,568.8 1040.5,600.0 1041.0,591.3 1041.9,603.8 1042.6,585.2 1043.4,611.4 1044.3,612.4 1044.8,583.4 1045.7,557.0 1046.3,504.1 1046.7,497.1 1047.7,418.2 1048.4,385.3 1048.9,340.0 1049.9,417.4 1050.6,449.8 1051.4,513.4 1052.0,516.8 1052.7,542.3 1053.3,583.9 1054.2,581.8 1054.9,612.9 1055.3,616.4 1056.3,588.9 1057.0,546.0 1057.8,487.9 1058.5,362.6 1059.3,254.6 1059.9,421.9 1060.5,523.0 1061.4,574.7 1062.1,586.0 1062.8,614.7 1063.5,604.8 1064.2,616.1 1065.0,588.9 1065.7,595.3 1066.2,562.4 1067.1,538.9 1067.6,502.0 1068.6,441.2 1069.3,375.8 1070.0,332.8 1070.7,255.4 1071.1,233.4 1071.5,322.6 1072.2,524.5 1072.9,546.0 1073.4,586.3 1074.3,556.1 1075.0,541.0 1075.8,546.1 1076.5,521.3 1077.2,532.1 1077.9,505.7 1078.5,512.5 1079.4,494.1 1080.1,501.3 1080.6,488.7 1081.5,517.1 1082.0,526.3 1083.0,526.0 1083.6,547.4 1084.4,549.3 1085.1,541.1 1085.7,558.8 1086.6,547.8 1087.3,556.7 1088.0,556.0 1088.8,524.6 1089.5,519.4 1089.8,502.0 1090.2,521.7 1090.9,517.0 1091.4,536.6 1092.3,527.7 1093.1,542.1 1093.5,530.8 1094.5,539.7 1094.9,549.9 1095.9,530.8 1096.7,537.7 1097.0,521.0 1097.4,532.3 1098.1,509.6 1099.0,514.8 1099.5,500.3 1100.5,502.6 1101.0,501.3 1101.7,522.6 1102.1,533.6 1102.4,520.5 1103.1,544.1 1104.2,538.4 1104.6,549.7 1105.3,529.6 1106.2,538.4 1106.7,516.2 1107.5,524.7 1108.3,505.2 1108.9,514.3 1109.9,498.7 1110.3,517.9 1111.3,519.5 1111.8,533.5 1112.5,526.1 1113.4,533.5 1113.9,543.9 1114.7,529.1 1115.4,537.2 1116.1,518.6 1116.8,526.6 1117.5,509.0 1118.3,521.5 1119.0,504.5 1119.5,514.3 1120.6,525.1 1121.1,549.7 1121.6,550.3 1122.6,553.8 1123.0,534.6 1124.0,530.3 1124.7,505.6 1125.5,525.4 1126.2,518.8 1126.7,536.0 1127.6,527.6 1128.3,532.9 1128.8,542.9 1129.8,528.3 1130.5,540.5 1130.8,528.4 1131.2,537.0 1131.9,531.8 1132.9,511.2 1133.4,520.5 1134.1,509.7 1134.5,522.0 1134.8,509.3 1135.5,531.9 1135.9,525.0 1136.3,537.7 1137.0,530.2 1138.0,545.4 1138.4,540.0 1139.1,553.2 1140.1,547.3 1140.6,553.9 1141.3,534.4 1142.1,532.8 1142.7,519.3 1143.5,527.6 1144.2,515.3 1144.9,528.2 1145.6,516.5 1146.2,529.7 1147.1,522.9 1147.8,533.0 1148.3,522.3 1149.2,537.7 1149.9,537.2 1150.3,527.8 1150.7,542.3 1151.4,529.9 1152.4,543.4 1152.8,538.6 1153.5,521.2 1154.4,522.4 1155.0,524.1 1155.8,509.1 1156.4,526.0 1157.1,519.7 1157.5,536.8 1157.9,524.8 1158.6,536.2 1159.5,528.1 1160.0,542.6 1160.7,530.2 1161.6,538.3 1162.2,529.4 1162.9,542.6 1163.6,533.1 1164.3,545.0 1165.1,535.2 1165.7,545.1 1166.5,533.3 1167.2,538.3 1167.7,526.1 1168.7,528.6 1169.4,513.8 1170.1,517.1 1170.8,535.9 1171.5,525.6 1172.3,537.6 1172.9,528.6 1173.7,543.3 1174.4,533.1 1174.9,545.9 1175.9,535.8 1176.6,541.8 1177.0,530.1 1177.3,540.5 1178.0,525.2 1179.0,534.8 1179.5,524.7 1180.2,523.9 1181.1,526.7 1181.6,537.0 1182.3,537.0 1183.1,525.0 1183.8,533.7 1184.5,529.8 1185.2,528.0 1185.9,517.6 1186.7,523.7 1187.2,510.5 1188.1,532.0 1188.7,523.6 1189.5,541.9 1190.3,549.3 1191.0,533.3 1191.7,538.4 1192.4,523.3 1193.1,533.5 1193.9,525.5 1194.4,536.4 1195.3,522.5 1196.0,534.6 1196.5,527.5 1197.5,546.0 1198.2,541.7 1198.5,554.4 1198.9,546.0 1199.5,557.8 1200.3,535.6 1201.0,532.0 1201.8,529.4 1202.6,537.6 1203.2,537.1 1203.9,533.9 1204.7,540.9 1205.4,535.4 1206.1,541.7 1206.7,533.6 1207.5,533.2 1208.3,540.2 1208.8,535.8 1209.7,544.4 1210.4,545.9 1210.8,540.0 1211.1,546.5 1211.9,540.7 1212.9,548.5 1213.3,543.8 1214.0,543.5 1214.9,549.5 1215.5,543.9 1216.2,553.4 1217.0,547.7 1217.6,555.0 1218.3,549.3 1219.0,558.5 1219.8,550.9 1220.5,556.8 1221.1,547.7 1221.9,554.0 1222.7,544.0 1223.1,549.6 1224.1,548.7 1224.8,555.8 1225.2,552.2 1225.5,557.3 1226.3,554.7 1227.2,549.2 1227.7,553.4 1228.4,546.8 1229.3,551.8 1229.9,546.1 1230.6,551.7 1231.3,544.4 1232.0,548.4 1232.7,543.5 1233.4,546.9 1234.2,551.3 1234.9,546.6 1235.4,549.7 1236.3,557.8 1237.1,551.4 1237.5,554.4 1238.5,554.5 1239.2,544.5 1239.5,552.0 1239.9,544.0 1240.7,550.3 1241.6,540.3 1242.1,550.1 1242.8,542.8 1243.6,542.8 1244.3,551.2 1245.0,550.3 1245.7,540.4 1246.4,550.5 1247.1,547.7 1247.7,553.7 1248.6,555.6 1249.3,567.3 1249.8,564.3 1250.7,569.2 1251.5,559.1 1251.8,563.1 1252.2,559.1 1252.9,565.8 1253.9,563.5 1254.3,570.9 1255.1,567.9 1255.9,580.5 1256.5,583.1 1257.2,588.4 1257.6,590.6 1257.9,620.0 1258.7,681.0 1259.0,710.2 1259.4,804.5 1260.1,804.5 1260.8,804.5 1261.5,804.5 1262.3,804.5 1263.0,804.5 1263.7,804.5 1264.4,804.5 1265.1,804.5 1265.9,804.5 1266.6,804.5 1267.5,804.5 1267.5,804.5"/>
<polyline stroke="#187cf0" points="248.5,761.4 248.5,761.5 249.2,756.5 249.9,749.2 250.5,745.7 251.4,734.9 252.1,728.1 252.8,719.2 253.5,711.2 254.3,705.0 255.0,697.0 255.7,690.4 256.4,682.5 257.1,676.3 257.7,669.3 258.6,659.0 259.3,648.1 260.0,639.4 260.4,634.9 260.7,630.1 261.5,624.4 262.2,616.0 262.9,612.3 263.9,599.5 264.3,595.7 265.1,595.3 265.8,591.3 266.5,586.7 267.2,579.3 267.9,594.1 268.8,603.7 269.4,613.1 270.1,629.8 270.4,632.9 270.8,638.4 271.5,640.5 272.1,648.9 273.0,645.5 273.7,650.8 274.4,648.4 274.7,648.1 275.1,652.0 275.9,647.0 276.8,649.7 277.3,645.9 278.0,652.1 278.8,650.9 279.5,654.9 280.2,652.9 280.9,658.7 281.5,655.8 282.3,657.1 283.1,663.0 284.0,660.4 284.5,658.6 285.2,661.2 285.9,656.2 286.6,660.3 287.4,660.9 288.1,659.0 289.1,663.3 289.5,659.0 290.3,662.9 291.0,657.7 291.7,660.8 292.2,656.2 293.1,659.2 293.9,654.0 294.6,653.2 295.3,650.4 296.3,639.1 296.7,635.7 297.5,619.3 297.9,627.9 298.9,616.5 299.6,593.3 300.3,600.2 300.8,582.7 301.8,598.9 302.4,576.5 303.2,587.7 303.9,561.8 304.5,576.2 305.4,552.8 306.1,567.7 306.5,551.6 307.6,552.1 308.3,572.1 309.0,563.1 309.7,592.2 310.2,593.1 311.1,588.3 311.7,564.1 312.6,557.7 313.3,569.4 313.7,555.7 314.0,566.7 314.7,555.7 315.5,561.3 315.8,556.2 316.2,567.1 316.9,555.7 317.2,572.4 317.6,567.4 318.4,591.0 319.1,587.1 319.9,552.1 320.5,563.1 321.5,541.8 321.9,558.3 322.9,568.9 323.4,564.8 324.0,582.8 324.8,564.4 325.4,578.6 326.3,559.8 327.1,566.1 327.7,554.7 328.4,569.0 329.1,564.4 330.1,524.5 330.6,517.5 331.2,486.4 332.0,467.5 332.7,468.5 333.6,495.3 334.4,548.0 334.9,583.1 335.3,597.2 335.6,597.7 336.3,580.5 336.9,595.6 337.8,559.4 338.3,557.2 339.2,539.2 339.8,539.7 340.7,545.7 341.4,569.9 342.1,560.8 343.1,580.8 343.5,568.5 344.5,540.6 345.0,517.5 345.5,517.2 346.4,531.3 346.9,561.6 348.0,572.6 348.6,561.2 349.3,569.0 349.6,547.2 350.0,562.4 350.7,555.7 351.7,535.6 352.2,545.3 352.9,535.1 353.3,544.7 353.6,535.1 354.3,559.4 354.7,558.0 355.1,570.2 355.8,562.2 356.8,580.8 357.2,571.0 357.9,579.9 358.8,568.5 359.4,572.0 360.1,566.8 360.9,574.4 361.5,565.2 362.3,573.1 362.9,559.8 363.7,571.4 364.4,546.2 365.0,545.4 365.9,553.7 366.4,545.9 367.3,561.5 367.7,569.8 368.0,563.3 368.7,600.4 369.7,642.3 370.2,642.8 370.9,642.8 371.8,622.8 372.3,633.1 373.1,611.1 373.8,622.7 374.2,605.3 375.2,598.9 375.9,600.5 376.3,587.6 376.7,591.7 377.4,562.8 378.3,561.1 378.8,535.4 379.5,534.7 380.0,514.3 381.0,517.0 381.7,498.2 382.0,498.7 382.4,500.1 383.1,532.4 383.5,526.0 383.9,552.6 384.6,569.6 384.9,562.1 385.3,588.6 386.0,591.4 386.5,593.1 387.5,571.3 388.0,545.2 388.9,527.5 389.2,513.1 389.6,526.7 390.3,525.4 390.6,537.1 391.1,552.6 391.8,540.2 392.3,552.1 393.2,548.2 393.9,552.8 394.3,547.9 394.7,552.3 395.4,547.4 396.4,552.9 396.8,564.9 397.5,551.5 398.4,564.4 399.0,545.0 399.9,535.5 400.4,506.0 401.3,497.6 401.9,410.5 402.6,326.8 403.2,239.5 404.0,320.6 404.7,419.8 405.5,482.7 406.0,559.5 406.9,611.6 407.5,623.7 408.3,654.5 409.1,654.6 409.8,619.1 410.7,602.4 411.2,554.6 412.0,515.4 412.7,446.0 413.4,398.8 413.8,357.0 414.1,403.6 414.8,473.0 415.3,539.5 416.3,575.1 416.9,605.1 417.7,637.8 418.3,640.3 419.4,542.9 419.9,518.3 420.3,476.0 421.3,503.6 421.8,500.7 422.7,541.5 423.5,560.0 424.2,573.4 424.9,573.5 425.5,589.0 426.3,556.1 427.1,554.4 427.6,533.6 428.5,551.0 429.2,563.6 429.6,554.2 429.9,571.0 430.7,563.6 431.3,576.7 432.1,571.0 432.8,575.2 433.7,559.2 434.3,575.1 435.0,555.8 435.7,547.4 436.4,560.8 436.8,547.9 437.1,548.2 437.9,576.6 438.8,582.8 439.3,568.6 440.0,575.8 440.9,555.2 441.5,563.5 442.2,550.7 442.9,559.9 443.6,547.9 444.3,552.8 445.1,547.4 446.0,547.4 446.5,558.8 447.2,549.6 448.1,569.2 448.7,559.3 449.4,572.4 450.1,563.0 450.8,572.7 451.5,563.5 452.2,572.6 453.0,569.2 453.7,555.7 454.2,556.2 455.1,558.2 455.9,569.0 456.3,568.5 457.3,567.6 458.0,548.3 458.3,561.9 458.7,539.2 459.5,537.8 460.4,505.7 460.9,507.7 461.6,482.9 462.0,482.3 462.3,481.9 463.3,511.0 463.8,492.3 464.5,492.4 465.2,456.1 465.9,446.5 466.5,422.6 467.4,468.4 467.8,473.7 468.1,500.8 468.8,513.2 469.6,556.9 470.3,555.9 471.0,584.0 471.7,585.2 472.4,590.0 473.1,600.8 473.7,613.6 474.6,582.3 475.2,562.3 476.0,540.0 476.8,498.7 477.5,527.0 478.4,544.2 478.9,571.0 479.6,572.8 480.3,607.3 480.9,611.5 481.8,578.4 482.5,573.0 482.9,560.6 483.9,518.0 484.7,510.2 485.0,490.5 485.4,519.8 486.1,537.1 486.6,581.7 487.7,621.8 488.3,608.7 489.0,562.9 489.5,558.3 490.4,545.4 491.2,524.4 491.9,549.9 492.6,564.7 493.2,563.9 494.0,586.5 494.7,570.5 495.5,576.2 496.3,589.0 496.9,571.0 497.6,569.8 498.3,541.1 499.1,549.8 499.8,537.7 500.5,554.9 501.4,546.1 501.9,561.6 502.7,549.4 503.5,563.3 504.1,552.2 504.8,571.1 505.5,567.8 506.3,577.2 507.0,568.9 507.7,577.2 508.4,566.1 509.1,576.7 509.9,559.7 510.6,568.5 511.1,558.3 512.0,524.4 512.7,527.2 513.2,514.1 513.5,526.4 514.2,525.5 514.9,557.3 515.2,546.5 515.6,565.5 516.3,559.5 517.3,582.8 517.8,572.6 518.5,576.1 519.3,554.8 519.9,565.7 520.7,538.4 521.4,547.1 522.1,521.3 522.8,534.3 523.4,519.2 524.3,533.1 525.0,529.3 525.5,533.8 526.4,557.4 527.1,551.7 527.5,557.8 527.9,570.0 528.6,561.8 529.3,584.0 530.0,572.6 530.7,588.6 531.5,577.2 532.0,589.0 532.9,562.6 533.7,562.8 534.3,517.9 534.7,513.1 535.1,514.5 535.8,540.9 536.7,541.1 537.2,561.7 537.9,556.9 538.8,570.5 539.4,562.4 540.1,573.4 540.8,557.0 541.5,574.1 542.3,579.2 542.9,578.7 543.9,556.6 544.4,517.7 544.9,499.4 546.0,464.6 546.6,480.1 547.3,475.8 548.0,495.3 548.6,527.2 549.3,584.9 550.2,576.9 551.1,542.3 551.6,548.4 552.3,524.6 553.2,513.1 553.8,530.1 554.5,521.0 555.2,543.9 555.9,534.3 556.7,554.4 557.3,542.6 558.1,556.7 558.8,549.6 559.3,556.2 560.3,557.3 561.0,551.6 561.4,552.1 561.7,564.6 562.4,551.6 563.4,573.7 563.9,568.3 564.6,591.3 565.5,582.6 566.0,606.9 566.7,597.6 567.5,628.0 568.2,614.0 569.2,627.9 569.6,628.4 570.3,604.0 571.0,613.1 571.8,578.4 572.6,580.5 573.2,558.7 573.9,557.5 574.7,536.7 575.4,522.6 576.3,521.3 576.8,522.6 577.8,560.1 578.3,557.2 579.2,578.7 579.7,569.0 580.4,576.2 580.8,564.1 581.9,573.7 582.6,562.6 582.9,571.3 583.3,569.0 584.0,546.1 584.9,550.6 585.5,526.2 586.2,537.4 586.6,521.3 586.9,534.0 587.6,530.1 588.0,555.6 588.3,540.5 589.1,561.5 590.1,556.1 590.5,577.1 591.2,567.2 592.1,578.7 592.7,567.4 593.4,575.4 594.2,553.5 594.8,561.5 595.6,547.9 596.3,555.0 597.3,566.5 597.7,548.8 598.4,572.7 599.3,559.3 599.9,577.2 600.6,566.2 601.4,576.7 602.0,575.8 602.7,561.0 603.4,566.6 604.2,567.4 604.9,549.5 605.5,550.0 606.3,549.5 607.1,554.4 607.5,556.0 608.5,551.6 609.2,561.0 609.6,559.1 609.9,553.3 610.7,562.7 611.6,555.9 612.1,568.5 612.8,560.7 613.7,568.5 614.3,563.9 615.0,558.3 615.7,569.0 616.4,549.5 617.1,558.0 617.8,541.9 618.8,516.3 619.3,458.1 620.0,405.7 620.7,320.1 621.5,253.1 622.2,191.8 623.1,540.2 623.6,557.6 624.3,624.5 625.1,637.2 625.6,668.0 626.5,640.3 627.0,643.7 627.9,625.4 628.7,634.7 629.1,620.2 629.4,632.6 630.1,614.2 631.1,583.9 631.5,594.8 632.3,564.8 633.2,560.5 633.7,538.0 634.4,546.9 635.2,521.6 635.9,532.1 636.6,516.2 637.3,525.5 638.3,557.6 638.7,553.0 639.5,588.1 639.9,589.0 640.9,578.8 641.4,558.2 642.3,557.5 643.1,533.1 643.4,533.6 643.8,533.1 644.5,553.7 645.5,548.6 645.9,569.0 646.7,556.5 647.5,568.5 648.1,559.4 648.8,562.4 649.6,552.1 650.3,562.7 651.0,554.2 651.6,566.4 652.4,550.4 653.1,562.2 653.7,541.2 654.6,547.9 655.3,542.3 655.7,535.6 656.0,535.1 656.7,558.1 657.5,552.7 657.8,557.4 658.2,569.9 658.9,562.4 659.8,575.1 660.3,566.4 661.1,575.1 661.9,574.6 662.5,575.1 663.2,566.0 663.9,562.3 664.7,570.6 665.4,553.1 666.0,560.9 666.8,530.4 667.5,519.8 668.0,519.2 669.0,520.3 669.7,544.0 670.1,534.0 670.4,548.8 671.1,539.9 672.1,559.1 672.6,563.0 673.3,552.6 674.2,566.7 674.7,559.5 675.5,573.8 676.2,574.6 676.9,575.1 677.6,553.6 678.3,557.0 679.1,546.8 679.8,520.6 680.3,517.3 681.4,498.7 681.9,500.8 682.7,535.4 683.4,537.6 684.1,554.2 684.8,551.0 685.5,566.4 686.3,561.0 687.0,577.8 687.5,571.0 688.4,583.3 689.1,576.9 689.6,582.8 690.6,566.0 691.3,570.9 691.6,556.0 692.0,561.6 692.7,540.5 693.7,547.3 694.2,540.1 694.9,522.8 695.7,523.3 696.3,523.5 697.4,557.6 697.8,556.6 698.8,582.8 699.2,567.1 700.2,559.5 700.7,537.8 701.5,525.4 702.1,533.2 702.9,566.8 703.5,563.7 704.3,580.8 705.0,561.6 706.0,556.1 706.4,543.4 707.1,553.0 708.0,534.4 708.6,547.9 709.3,533.6 710.1,544.0 710.7,537.0 711.5,511.1 712.1,518.2 712.9,427.2 713.5,381.0 714.3,444.9 715.1,473.9 715.8,538.4 716.5,533.1 717.2,561.4 717.9,571.0 718.3,565.1 718.7,586.5 719.4,599.4 720.3,613.6 720.8,607.0 721.5,575.7 722.0,578.1 723.0,521.0 723.4,519.3 724.4,480.3 725.1,509.2 725.5,541.7 725.9,548.1 726.5,597.2 727.3,574.4 728.1,523.2 728.7,493.7 729.3,444.0 730.2,488.2 730.9,504.7 731.4,536.7 732.3,587.2 732.6,611.5 733.1,582.2 733.8,563.1 734.3,524.3 735.0,433.4 735.9,493.1 736.7,559.5 737.4,572.8 738.1,616.0 738.8,640.3 739.5,632.4 740.3,596.8 740.8,599.9 741.7,527.8 742.1,520.6 742.4,455.8 743.3,337.5 743.9,382.2 744.6,459.3 745.3,516.1 745.8,545.2 746.7,592.7 747.4,609.5 748.2,573.6 749.1,556.2 749.6,515.7 750.1,502.8 751.1,540.6 751.5,544.7 752.5,577.9 753.2,584.9 753.9,585.2 754.7,563.5 755.2,561.8 756.1,569.1 756.8,550.6 757.3,556.7 758.3,533.6 759.0,536.6 759.7,553.2 760.3,551.3 761.1,566.8 761.9,558.0 762.4,571.0 763.3,566.6 764.0,565.9 764.4,570.5 764.7,556.8 765.5,571.0 766.2,548.0 766.5,558.7 766.9,531.1 767.5,519.2 768.3,519.2 768.9,530.2 769.8,525.5 770.6,552.1 771.2,530.5 772.1,511.0 772.7,514.3 773.5,549.3 774.1,543.8 774.8,554.2 775.2,562.3 775.5,553.1 776.3,562.8 777.2,546.8 777.7,545.6 778.4,534.8 779.3,531.5 779.9,543.1 780.6,542.6 780.9,552.1 781.3,534.4 782.0,538.0 782.3,523.3 782.7,544.0 783.4,591.0 784.2,570.1 784.9,569.5 785.4,546.9 786.3,538.3 787.1,519.2 787.8,543.3 788.5,545.9 789.2,568.6 789.9,553.5 790.5,568.5 791.4,547.9 792.0,562.8 792.8,532.6 793.6,527.4 794.3,530.0 795.3,550.0 795.7,566.4 796.7,568.5 797.1,558.3 797.9,564.5 798.7,541.9 799.3,551.5 800.0,523.7 800.8,519.2 801.5,527.3 802.2,558.9 802.9,554.1 803.9,573.1 804.3,566.9 805.1,573.1 805.9,572.6 806.5,553.2 807.2,551.1 807.6,525.5 807.9,527.4 808.6,490.5 809.4,529.7 810.0,536.3 810.8,556.6 811.5,558.7 812.1,558.2 813.0,546.7 813.7,554.2 814.1,532.2 815.1,540.4 815.9,522.8 816.2,523.3 816.6,517.1 817.3,532.3 818.2,527.4 818.7,527.9 819.5,507.3 820.3,516.0 820.9,497.8 821.3,496.7 821.6,503.7 822.3,557.2 823.4,591.0 823.8,591.5 824.8,551.4 825.2,562.2 825.9,530.4 826.4,529.5 827.4,535.9 828.1,553.9 828.5,546.2 828.8,563.9 829.5,556.8 830.5,570.5 831.0,561.9 831.7,551.8 832.6,557.3 833.1,555.3 833.9,532.9 834.6,538.3 835.3,506.7 836.3,500.2 836.7,455.0 837.5,428.0 838.2,363.9 839.2,309.5 839.6,357.9 840.3,478.2 840.8,524.4 841.8,579.8 842.2,619.7 843.2,583.7 843.9,578.4 844.7,587.8 845.3,619.7 846.1,581.5 846.9,556.8 847.5,529.4 848.3,482.9 848.9,458.5 849.7,493.7 850.6,562.3 851.1,568.4 852.1,617.7 852.6,588.4 853.5,541.4 854.0,547.7 854.7,514.9 855.2,517.1 855.5,498.6 856.2,496.7 856.9,528.9 857.2,560.5 857.6,560.9 858.3,613.5 858.6,620.8 859.1,595.2 859.7,525.0 860.7,437.0 861.2,449.7 861.9,486.3 862.9,501.9 863.4,557.0 864.4,632.1 864.8,615.0 865.8,542.1 866.3,499.6 867.0,447.2 867.6,381.3 868.4,443.8 869.1,473.4 869.9,539.4 870.6,559.9 871.2,599.0 872.0,611.0 872.6,632.1 873.5,588.9 874.0,579.7 874.9,535.2 875.7,516.0 876.3,509.0 877.1,482.8 877.8,491.4 878.7,467.5 879.2,498.2 879.9,508.6 880.8,559.7 881.4,570.8 882.2,609.5 882.8,562.3 883.5,538.4 884.3,493.0 884.8,476.5 885.9,524.2 886.4,551.0 887.1,562.3 887.6,552.0 888.6,582.8 889.3,561.9 890.0,559.0 890.7,538.5 891.5,544.8 892.1,521.7 892.9,535.0 893.6,520.8 894.1,521.3 895.1,532.7 895.8,557.5 896.5,557.2 897.2,576.7 897.9,571.7 898.7,548.5 899.3,560.2 900.1,537.6 900.8,544.5 901.3,524.1 902.3,535.1 903.0,518.7 903.4,519.2 903.7,519.2 904.4,547.2 904.8,539.2 905.1,563.1 905.9,555.1 906.4,573.1 907.3,561.7 908.0,573.1 908.5,572.6 909.5,564.8 910.1,537.8 910.9,516.0 911.6,511.0 912.3,526.4 913.0,562.9 913.8,563.5 914.5,558.6 915.1,570.5 915.9,551.1 916.7,554.1 917.1,537.4 918.1,542.9 918.7,527.4 919.5,541.7 920.3,535.0 920.8,562.5 921.7,549.8 922.4,562.8 922.8,562.3 923.9,551.2 924.6,529.8 924.9,542.0 925.3,514.7 925.9,511.0 926.9,542.9 927.5,575.4 928.0,582.8 928.9,562.7 929.4,534.2 930.3,542.8 931.1,529.5 931.8,546.8 932.7,558.2 933.2,557.8 934.1,582.8 934.7,565.7 935.6,561.8 936.1,534.4 936.8,539.9 937.2,525.4 937.5,524.9 938.3,545.4 938.8,543.4 939.7,566.4 940.3,553.5 941.1,569.0 941.7,568.5 942.6,556.8 943.4,560.7 944.0,552.1 944.7,566.6 945.4,555.5 946.2,551.9 947.1,525.4 947.6,529.5 948.5,543.1 949.1,560.8 949.8,551.5 950.5,560.3 951.2,556.2 951.9,560.6 952.6,549.2 953.4,558.9 954.1,542.6 954.6,552.9 955.5,527.7 956.1,539.3 957.0,518.7 957.3,519.2 957.7,522.5 958.4,555.2 958.7,542.6 959.1,563.7 959.9,555.7 960.2,568.5 960.6,569.0 961.3,546.6 961.8,562.6 962.7,533.0 963.5,521.2 963.9,519.2 964.2,532.3 964.9,538.4 965.3,556.4 965.6,552.9 966.3,580.8 967.1,577.5 968.0,547.6 968.5,552.0 969.2,533.2 970.0,536.8 970.7,512.0 971.4,508.9 972.1,482.7 972.8,468.8 973.5,469.3 974.3,441.1 975.0,425.7 975.7,412.7 976.3,412.0 976.8,524.2 977.1,559.5 977.9,582.6 978.2,611.5 978.6,612.0 979.3,597.3 980.3,603.3 980.7,592.8 981.5,611.7 982.2,600.9 982.7,613.6 983.6,565.4 984.4,542.4 985.3,474.7 985.8,498.7 986.5,509.5 986.8,539.6 987.2,537.4 987.9,574.2 988.5,574.7 989.4,599.4 989.9,600.3 990.8,580.1 991.6,543.5 992.3,539.8 993.0,500.9 993.7,510.4 994.6,496.7 995.1,519.1 995.9,522.5 996.3,551.1 997.3,555.3 997.7,568.5 998.0,559.6 998.7,549.4 999.5,559.3 999.8,542.6 1000.2,555.7 1000.9,531.0 1001.2,531.5 1001.6,531.0 1002.3,556.0 1002.8,551.8 1003.8,559.7 1004.5,575.1 1004.9,574.6 1005.2,559.7 1005.9,569.2 1006.5,557.3 1007.4,539.2 1008.0,539.7 1008.8,539.2 1009.5,553.8 1010.0,541.5 1011.0,565.8 1011.7,562.9 1012.1,570.5 1012.4,558.1 1013.1,563.5 1014.1,534.2 1014.6,531.2 1015.3,530.1 1015.8,519.2 1016.7,527.4 1017.2,541.8 1018.0,525.6 1018.9,538.1 1019.6,516.7 1020.3,527.8 1021.1,517.2 1021.8,525.1 1022.5,548.1 1023.1,547.0 1023.9,564.9 1024.7,555.1 1025.4,564.9 1025.8,564.4 1026.1,564.9 1026.8,553.9 1027.5,561.3 1028.3,545.6 1029.0,556.0 1029.7,537.0 1030.3,531.7 1031.1,544.1 1031.9,527.3 1032.4,526.0 1033.3,498.1 1034.0,485.5 1034.7,477.3 1035.5,437.9 1036.2,425.1 1036.9,391.1 1037.6,366.7 1038.1,357.0 1038.1,523.7 1039.1,583.0 1039.5,586.5 1040.5,617.0 1041.0,609.7 1041.9,621.2 1042.6,604.1 1043.4,628.1 1044.3,629.0 1044.8,602.4 1045.7,578.1 1046.3,528.9 1046.7,521.3 1047.7,437.7 1048.4,406.5 1048.9,363.4 1049.9,436.9 1050.6,468.5 1051.4,536.9 1052.0,541.4 1052.7,564.6 1053.3,602.6 1054.2,600.5 1054.9,628.9 1055.3,632.1 1056.3,606.0 1057.0,565.1 1057.8,500.0 1058.5,379.4 1059.3,275.4 1059.9,436.5 1060.5,541.2 1061.4,592.6 1062.1,604.8 1062.8,630.9 1063.5,621.8 1064.2,632.1 1065.0,607.0 1065.7,612.8 1066.2,582.5 1067.1,560.4 1067.6,525.2 1068.6,461.7 1069.3,393.8 1070.0,351.2 1070.7,276.9 1071.1,255.7 1071.5,341.4 1072.2,542.1 1072.9,564.6 1073.4,603.3 1074.3,577.1 1075.0,563.2 1075.8,567.6 1076.5,544.7 1077.2,554.5 1077.9,530.0 1078.5,536.1 1079.4,518.9 1080.1,525.5 1080.6,513.7 1081.5,540.1 1082.0,548.7 1083.0,548.5 1083.6,568.2 1084.4,570.1 1085.1,562.6 1085.7,579.0 1086.6,568.9 1087.3,577.2 1088.0,576.6 1088.8,547.8 1089.5,543.1 1089.8,527.2 1090.2,545.3 1090.9,541.0 1091.4,559.0 1092.3,550.8 1093.1,563.9 1093.5,553.6 1094.5,561.7 1094.9,571.1 1095.9,553.6 1096.7,559.9 1097.0,544.5 1097.4,554.9 1098.1,534.0 1099.0,538.8 1099.5,525.5 1100.5,527.6 1101.0,526.4 1101.7,545.9 1102.1,556.1 1102.4,544.1 1103.1,565.7 1104.2,560.5 1104.6,570.8 1105.3,552.4 1106.2,560.4 1106.7,540.0 1107.5,547.8 1108.3,529.9 1108.9,538.2 1109.9,523.9 1110.3,541.6 1111.3,543.0 1111.8,555.9 1112.5,549.1 1113.4,555.9 1113.9,565.4 1114.7,551.9 1115.4,559.3 1116.1,542.2 1116.8,549.6 1117.5,533.4 1118.3,544.8 1119.0,529.2 1119.5,538.2 1120.6,548.2 1121.1,570.7 1121.6,571.2 1122.6,574.5 1123.0,556.8 1124.0,552.9 1124.7,530.1 1125.5,548.3 1126.2,542.3 1126.7,558.1 1127.6,550.4 1128.3,555.2 1128.8,564.5 1129.8,551.0 1130.5,562.2 1130.8,551.1 1131.2,559.0 1131.9,554.2 1132.9,535.2 1133.4,543.9 1134.1,533.9 1134.5,545.1 1134.8,533.5 1135.5,554.3 1135.9,548.0 1136.3,559.6 1137.0,552.7 1138.0,566.7 1138.4,561.7 1139.1,573.8 1140.1,568.4 1140.6,574.5 1141.3,556.6 1142.1,555.1 1142.7,542.6 1143.5,550.3 1144.2,539.0 1144.9,550.8 1145.6,540.1 1146.2,552.2 1147.1,546.0 1147.8,555.3 1148.3,545.5 1149.2,559.6 1149.9,559.1 1150.3,550.5 1150.7,563.8 1151.4,552.5 1152.4,564.9 1152.8,560.4 1153.5,544.4 1154.4,545.5 1155.0,547.0 1155.8,533.3 1156.4,548.8 1157.1,543.0 1157.5,558.8 1157.9,547.7 1158.6,558.2 1159.5,550.8 1160.0,564.1 1160.7,552.7 1161.6,560.1 1162.2,551.9 1162.9,564.0 1163.6,555.4 1164.3,566.3 1165.1,557.3 1165.7,566.4 1166.5,555.6 1167.2,560.2 1167.7,548.9 1168.7,551.2 1169.4,537.6 1170.1,540.6 1170.8,557.9 1171.5,548.4 1172.3,559.5 1172.9,551.2 1173.7,564.7 1174.4,555.4 1174.9,567.1 1175.9,557.8 1176.6,563.4 1177.0,552.6 1177.3,562.2 1178.0,548.1 1179.0,556.9 1179.5,547.6 1180.2,546.9 1181.1,549.5 1181.6,558.9 1182.3,558.9 1183.1,547.9 1183.8,555.9 1184.5,552.3 1185.2,550.6 1185.9,541.1 1186.7,546.7 1187.2,534.6 1188.1,554.3 1188.7,546.6 1189.5,563.5 1190.3,570.3 1191.0,555.5 1191.7,560.3 1192.4,546.3 1193.1,555.7 1193.9,548.4 1194.4,558.4 1195.3,545.6 1196.0,556.8 1196.5,550.2 1197.5,567.2 1198.2,563.2 1198.5,575.0 1198.9,567.2 1199.5,578.0 1200.3,557.6 1201.0,554.4 1201.8,552.0 1202.6,559.5 1203.2,559.1 1203.9,556.1 1204.7,562.6 1205.4,557.4 1206.1,563.2 1206.7,555.8 1207.5,555.5 1208.3,561.9 1208.8,557.8 1209.7,565.7 1210.4,567.1 1210.8,561.7 1211.1,567.7 1211.9,562.4 1212.9,569.5 1213.3,565.2 1214.0,564.9 1214.9,570.5 1215.5,565.3 1216.2,574.0 1217.0,568.7 1217.6,575.5 1218.3,570.2 1219.0,578.7 1219.8,571.7 1220.5,577.2 1221.1,568.8 1221.9,574.5 1222.7,565.4 1223.1,570.5 1224.1,569.7 1224.8,576.2 1225.2,572.9 1225.5,577.6 1226.3,575.2 1227.2,570.2 1227.7,574.0 1228.4,567.9 1229.3,572.6 1229.9,567.3 1230.6,572.5 1231.3,565.8 1232.0,569.5 1232.7,564.9 1233.4,568.0 1234.2,572.1 1234.9,567.8 1235.4,570.6 1236.3,578.0 1237.1,572.2 1237.5,575.0 1238.5,575.0 1239.2,565.9 1239.5,572.7 1239.9,565.3 1240.7,571.2 1241.6,562.0 1242.1,571.0 1242.8,564.3 1243.6,564.3 1244.3,572.0 1245.0,571.2 1245.7,562.0 1246.4,571.3 1247.1,568.8 1247.7,574.3 1248.6,576.0 1249.3,586.8 1249.8,584.0 1250.7,588.5 1251.5,579.3 1251.8,582.9 1252.2,579.3 1252.9,585.4 1253.9,583.3 1254.3,590.1 1255.1,587.4 1255.9,598.9 1256.5,601.3 1257.2,606.7 1257.6,609.5 1257.9,636.9 1258.7,693.4 1259.0,720.0 1259.4,805.0 1260.1,805.0 1260.8,805.0 1261.5,805.0 1262.3,805.0 1263.0,805.0 1263.7,805.0 1264.4,805.0 1265.1,805.0 1265.9,805.0 1266.6,805.0 1267.5,805.0 1267.5,805.0"/>
<polyline stroke="#24ee24" points="247.8,666.8 250.0,667.5 253.0,669.0 256.0,670.5 259.0,671.3 270.0,671.3 285.0,671.5 295.6,671.5 300.0,672.5 304.0,674.0 315.0,674.3 328.0,674.5 331.0,676.5 334.0,674.8 345.0,675.0 360.0,675.3 368.0,675.3 370.0,677.0 373.0,675.5 385.0,676.0 400.0,676.3 402.0,679.5 405.0,677.0 408.0,676.5 411.0,679.7 414.0,676.8 418.0,677.5 420.0,678.5 423.0,677.0 430.0,677.3 450.0,677.7 464.0,677.8 466.0,679.8 469.0,678.0 480.0,678.3 500.0,678.6 520.0,678.9 545.0,679.0 547.0,680.3 550.0,679.2 570.0,679.3 600.0,679.6 606.0,680.6 609.0,679.4 612.0,680.8 616.0,679.6 620.0,680.2 622.0,684.5 624.0,685.0 626.0,680.3 630.0,679.8 634.0,680.4 660.0,680.4 690.0,680.4 705.0,680.6 712.0,680.4 714.0,682.5 717.0,680.5 725.0,680.6 729.0,682.6 732.0,680.6 735.0,682.8 738.0,680.4 741.0,681.0 743.5,683.5 746.0,680.5 752.0,680.9 757.0,680.6 780.0,680.9 810.0,681.0 830.0,681.2 836.0,681.0 839.0,683.6 842.0,680.8 848.0,682.5 851.0,681.0 856.0,682.2 860.0,683.0 863.0,681.0 867.0,683.2 870.0,681.2 874.0,682.3 878.0,683.0 881.0,681.2 885.0,682.5 888.0,681.5 900.0,681.8 915.0,682.0 930.0,682.2 960.0,682.5 972.0,682.7 976.0,685.0 979.0,682.8 982.0,681.5 985.0,683.4 990.0,682.8 1010.0,683.0 1030.0,683.2 1035.0,683.2 1038.0,686.5 1041.0,683.4 1046.0,683.6 1049.0,687.0 1052.0,683.5 1056.0,684.0 1059.5,688.0 1062.0,683.5 1067.0,684.0 1071.0,688.3 1074.0,683.6 1080.0,684.3 1090.0,683.8 1105.0,683.9 1140.0,684.0 1180.0,684.0 1220.0,684.0 1250.0,684.0 1257.0,684.0 1258.5,682.0 1260.0,680.3 1267.5,680.0"/>
</g></g></svg>
</body></html>
